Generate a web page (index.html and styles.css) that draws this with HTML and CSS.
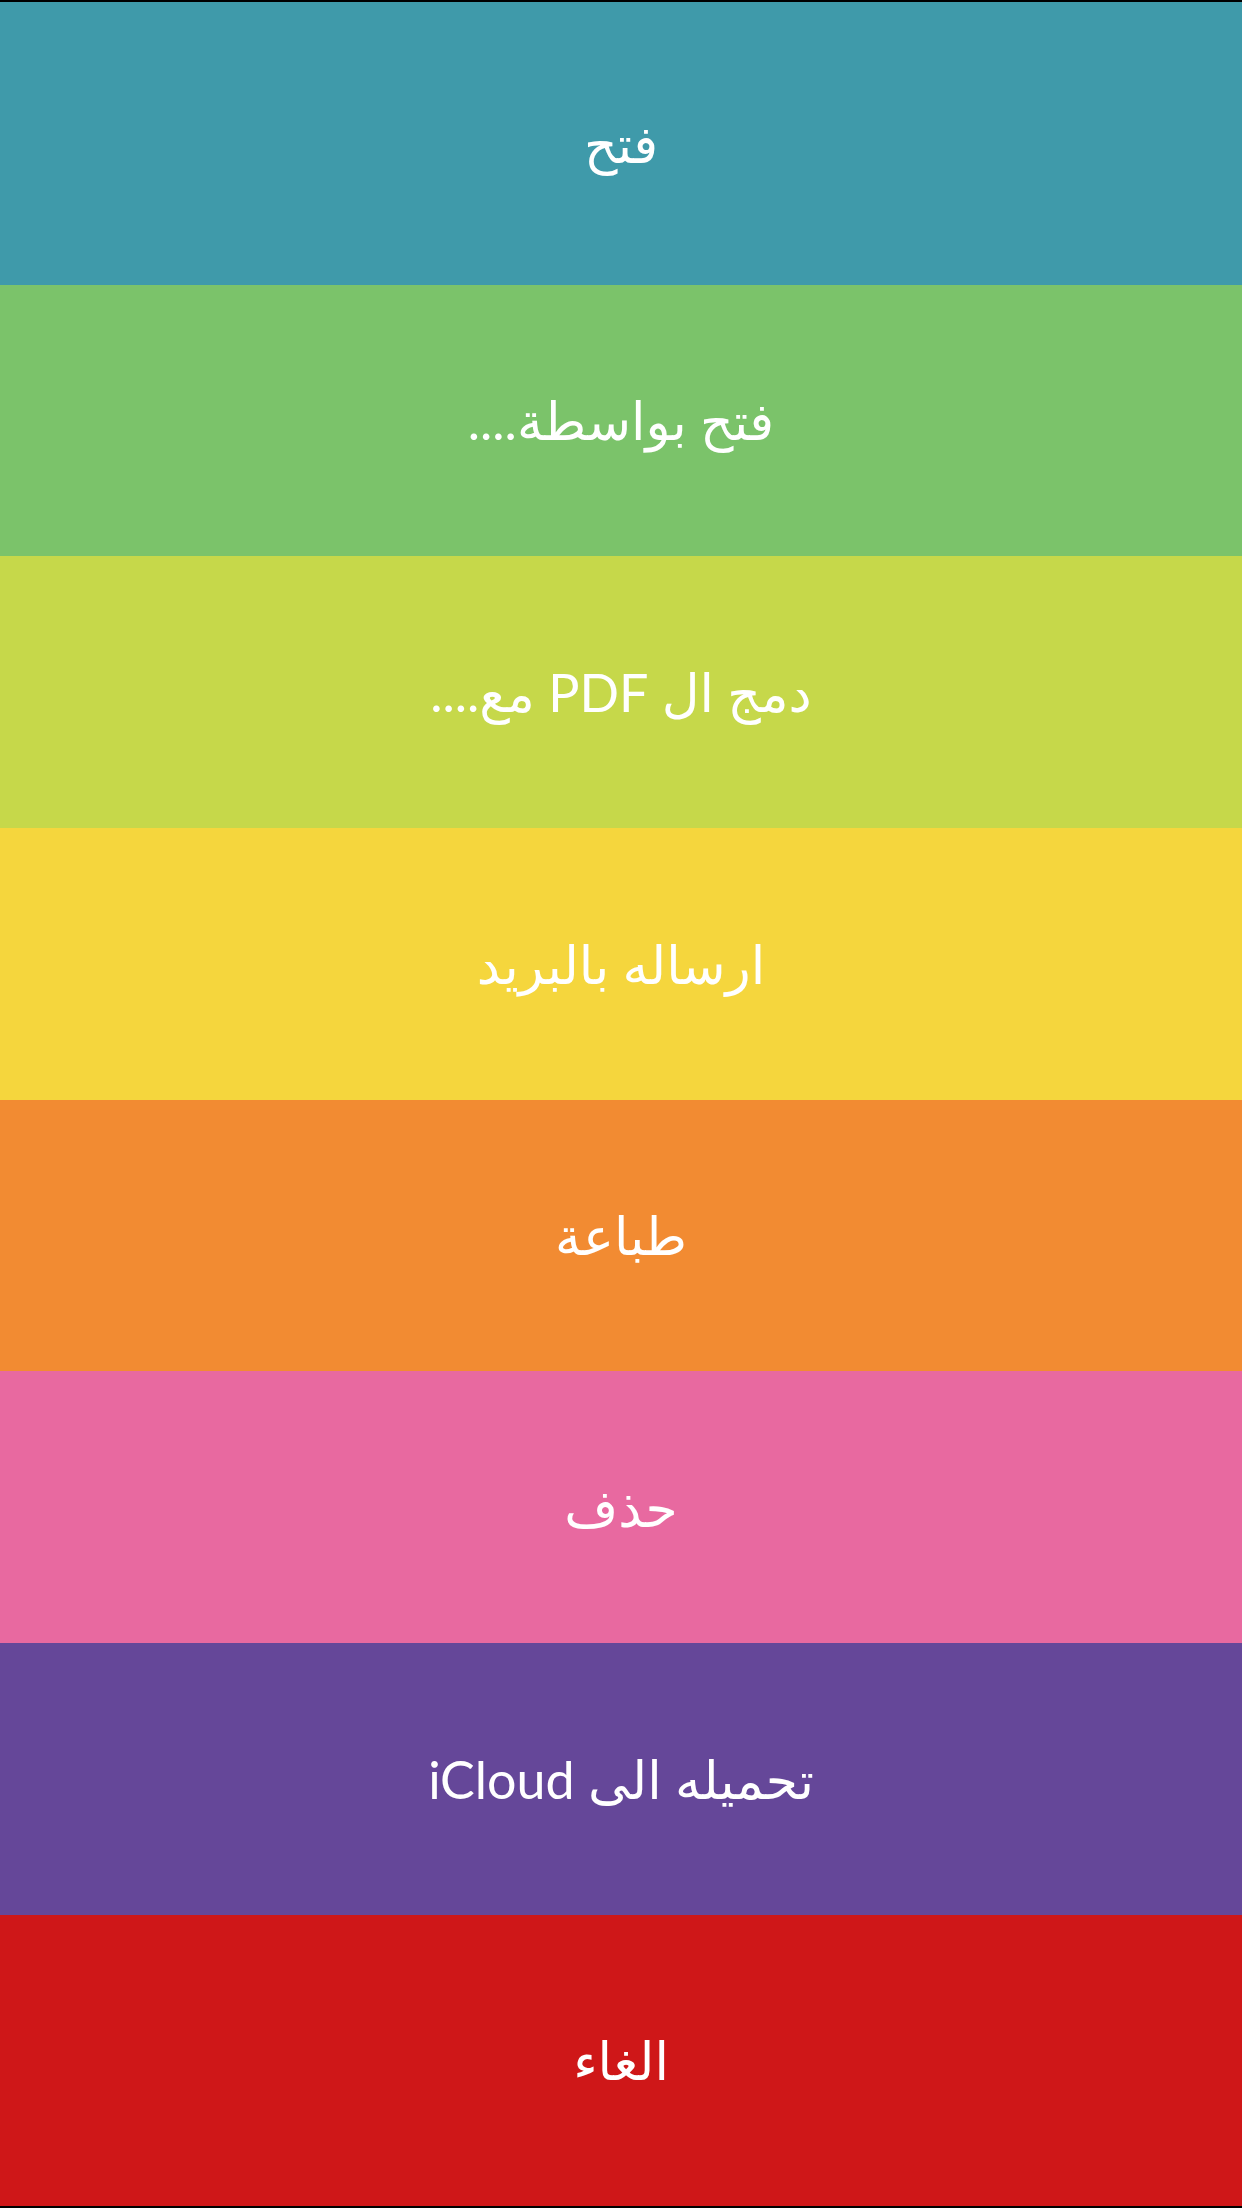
FILE: index.html
```html
<!DOCTYPE html>
<html lang="ar" dir="rtl">
<head>
<meta charset="utf-8">
<title>Actions</title>
<link rel="stylesheet" href="styles.css">
</head>
<body>
<div class="sheet">
  <div class="item item-open">فتح</div>
  <div class="item item-openwith">فتح بواسطة....</div>
  <div class="item item-merge">دمج ال PDF مع....</div>
  <div class="item item-mail">ارساله بالبريد</div>
  <div class="item item-print">طباعة</div>
  <div class="item item-delete">حذف</div>
  <div class="item item-icloud">تحميله الى iCloud</div>
  <div class="item item-cancel">الغاء</div>
</div>
</body>
</html>
```

FILE: styles.css
```css
html, body {
  margin: 0;
  padding: 0;
  background: #000;
}
.sheet {
  width: 1242px;
  height: 2208px;
  box-sizing: border-box;
  padding: 2px 0;
  display: flex;
  flex-direction: column;
}
.item {
  display: flex;
  align-items: center;
  justify-content: center;
  color: #fff;
  font-family: "Lato", "DejaVu Sans", sans-serif;
  font-size: 52px;
  height: 272px;
  flex: none;
}
.item-open { background: #3f9aaa; height: 283px; }
.item-openwith { background: #7bc36a; height: 271px; }
.item-merge { background: #c6d84a; }
.item-mail { background: #f5d63d; }
.item-print { background: #f28b32; height: 271px; }
.item-delete { background: #e869a0; }
.item-icloud { background: #654799; }
.item-cancel { background: #cf1718; height: 291px; }
```
